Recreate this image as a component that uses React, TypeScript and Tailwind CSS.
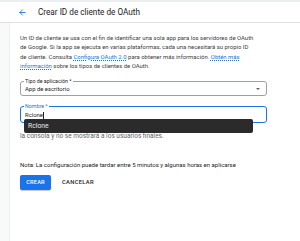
import { ArrowLeft } from 'lucide-react'

export default function App() {
  return (
    <div className="w-[300px] h-[241px] bg-white overflow-hidden flex flex-col font-['Roboto',sans-serif] text-[#3c4043]">
      {/* Header */}
      <div className="h-[23px] shrink-0 border-t-[2px] border-t-[#eceff1] border-b border-b-[#e0e0e0] flex items-center pl-[18px]">
        <ArrowLeft className="w-[9px] h-[9px] text-[#1a73e8]" strokeWidth={2.4} />
        <h1 className="ml-[11px] text-[8.2px] text-[#202124] leading-none">Crear ID de cliente de OAuth</h1>
      </div>

      <div className="flex flex-1">
        <div className="w-[10px] shrink-0 bg-[#f8f9fa] border-r border-[#eeeeee]" />

        {/* Content */}
        <div className="relative pl-[10px] pt-[10px] w-[257px] shrink-0">
          <p className="text-[5.95px] leading-[9.3px] whitespace-nowrap">
            Un ID de cliente se usa con el fin de identificar una sola app para los servidores de OAuth
            <br />
            de Google. Si la app se ejecuta en varias plataformas, cada una necesitará su propio ID
            <br />
            de cliente. Consulta{' '}
            <span className="text-[#1a73e8] underline decoration-dotted">Configura OAuth 2.0</span> para obtener más
            información. <span className="text-[#1a73e8] underline decoration-dotted">Obtén más</span>
            <br />
            <span className="text-[#1a73e8] underline decoration-dotted">información</span> sobre los tipos de
            clientes de OAuth.
          </p>

          {/* Tipo de aplicación */}
          <div className="relative mt-[11px] h-[15px] border border-[#9aa0a6] rounded-[3px] flex items-center pl-[4px] pr-[6px]">
            <span className="absolute -top-[4px] left-[3px] px-[1px] bg-white text-[5.3px] leading-[7px] text-[#202124]">
              Tipo de aplicación *
            </span>
            <span className="text-[5.9px] text-[#202124] flex-1 mt-[1px]">App de escritorio</span>
            <span className="w-0 h-0 border-l-[2.5px] border-r-[2.5px] border-t-[2.5px] border-l-transparent border-r-transparent border-t-[#5f6368]" />
          </div>

          {/* Nombre */}
          <div className="relative mt-[10px] h-[17px] border-[1.5px] border-[#1a73e8] rounded-[3px] flex items-center pl-[4px]">
            <span className="absolute -top-[4.5px] left-[3px] px-[1px] bg-white text-[5.3px] leading-[7px] text-[#1a73e8]">
              Nombre *
            </span>
            <span className="text-[5.9px] text-[#202124] mt-[1px]">Rclone</span>
            <span className="w-[0.8px] h-[7px] bg-[#202124] mt-[1px]" />
          </div>

          <p className="mt-[10px] text-[6.5px] leading-[7px] text-[#5f6368]">
            la consola y no se mostrará a los usuarios finales.
          </p>

          <p className="mt-[21px] text-[6px] leading-[8px] text-[#202124]">
            Nota: La configuración puede tardar entre 5 minutos y algunas horas en aplicarse
          </p>

          <div className="mt-[6px] flex items-center">
            <button className="w-[31px] h-[15px] rounded-[2px] bg-[#1a73e8] text-white text-[5.6px] font-medium tracking-[0.2px] shadow-[0_1px_1px_rgba(60,64,67,0.3)]">
              CREAR
            </button>
            <button className="ml-[11px] text-[5.8px] font-medium text-[#202124] tracking-[0.3px]">CANCELAR</button>
          </div>

          {/* Autocomplete suggestion */}
          <div className="absolute top-[96px] left-[14px] w-[229px] h-[14px] bg-[#2b2b2b] rounded-[2px] flex items-center pl-[4px]">
            <span className="text-[6.8px] text-[#e8eaed]">Rclone</span>
          </div>
        </div>
      </div>
    </div>
  )
}
